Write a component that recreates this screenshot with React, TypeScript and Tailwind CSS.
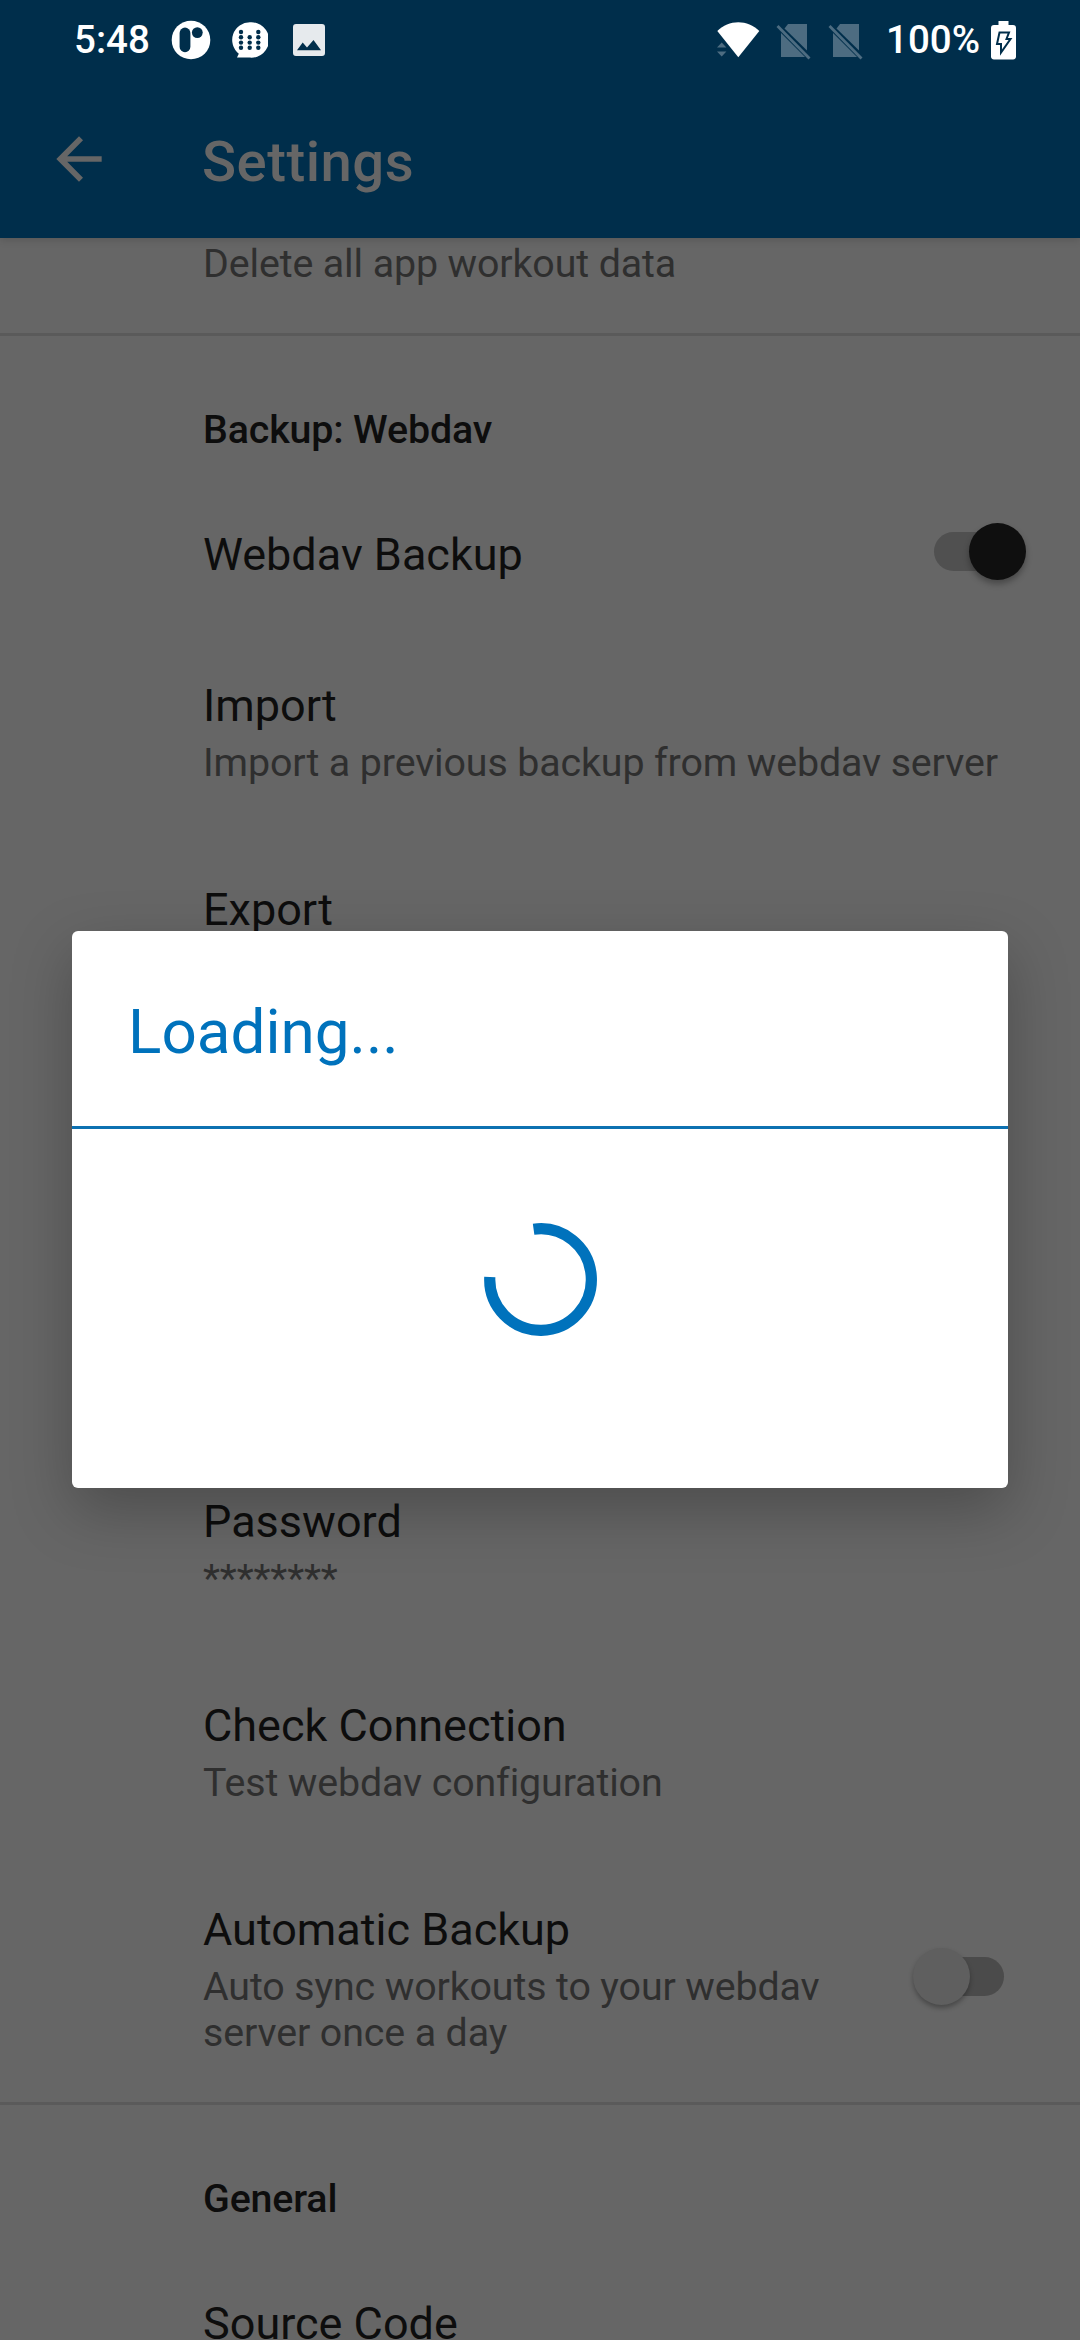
import React from "react";

function Switch({ on }: { on: boolean }) {
  return (
    <div
      className={`relative mr-[76px] mt-[-7px] h-[39px] w-[70px] shrink-0 rounded-full ${on ? "bg-[#505050]" : "bg-[#4b4b4b]"}`}
    >
      <div
        className={`absolute top-[-9px] size-[57px] rounded-full ${
          on
            ? "left-[35px] bg-[#0f0f0f] shadow-[0_4px_6px_rgba(0,0,0,0.3)]"
            : "left-[-21px] bg-[#5f5f5f] shadow-[0_3px_5px_rgba(0,0,0,0.3)]"
        }`}
      />
    </div>
  );
}

function Category({ title }: { title: string }) {
  return (
    <div className="h-[140px] shrink-0 pl-[203px] pt-[71px] text-[39.375px] font-medium leading-[46px] tracking-[-0.15px] text-[#0d0d0d]">
      {title}
    </div>
  );
}

function Divider() {
  return <div className="h-[3px] shrink-0 bg-[#5a5a5a]" />;
}

function Row({
  title,
  summary,
  height,
  children,
}: {
  title: string;
  summary?: string;
  height: string;
  children?: React.ReactNode;
}) {
  return (
    <div className={`flex shrink-0 items-center justify-between pl-[203px] ${height}`}>
      <div className={`flex flex-col gap-[8px] ${children ? "w-[640px]" : ""} ${summary ? "h-full pt-[45px]" : "pb-[1px]"}`}>
        <div className="text-[45px] leading-[53px] text-[#0d0d0d]">{title}</div>
        {summary && (
          <div className="text-[39.375px] leading-[46px] tracking-[-0.12px] text-[#2f2f2f]">{summary}</div>
        )}
      </div>
      {children}
    </div>
  );
}

function SimOff({ className }: { className: string }) {
  return (
    <svg className={className} width="36" height="37" viewBox="0 0 36 37" fill="#4d6c81">
      <path d="M12 0H31V26.5L8.5 4.5Z" />
      <path d="M5 9L29 33H5Z" />
      <path d="M0.5 3L2.5 1L34.5 33.5L32.5 35.5Z" />
    </svg>
  );
}

function StatusBar() {
  const dots: number[][] = [
    [9, 10], [9, 15.3], [9, 20.6], [9, 25.8],
    [17.7, 15.3], [17.7, 20.6], [17.7, 25.8],
    [26.3, 10], [26.3, 15.3], [26.3, 20.6], [26.3, 25.8],
  ];
  return (
    <div className="flex h-[80px] items-center justify-between pl-[74px] pr-[64px] text-[38.5px] font-medium leading-[46px] text-white">
      <div className="flex items-center">
        <span className="w-[97px]">5:48</span>
        <svg width="40" height="40" viewBox="0 0 40 40">
          <circle cx="20" cy="20" r="19.3" fill="#fff" />
          <rect x="8.6" y="7.6" width="10.8" height="24.6" rx="5.4" fill="#002e4b" />
          <circle cx="26.3" cy="12.6" r="5.4" fill="#002e4b" />
        </svg>
        <svg className="ml-[21px]" width="36" height="36" viewBox="0 0 36 36">
          <path d="M18 0.3A17.7 17.7 0 1 1 18 35.6H5L6.8 31.8A17.7 17.7 0 0 1 18 0.3Z" fill="#fff" />
          {dots.map(([x, y]) => (
            <circle key={`${x}-${y}`} cx={x} cy={y} r="2.2" fill="#002e4b" />
          ))}
        </svg>
        <svg className="ml-[25px]" width="32" height="32" viewBox="0 0 32 32">
          <path
            fillRule="evenodd"
            fill="#e6eaed"
            d="M3 0H29A3 3 0 0 1 32 3V29A3 3 0 0 1 29 32H3A3 3 0 0 1 0 29V3A3 3 0 0 1 3 0ZM4 26.3H28L20.5 16L14 23.6L9.7 18.5Z"
          />
        </svg>
      </div>
      <div className="flex items-center">
        <svg width="43" height="36" viewBox="0 0 43 36">
          <path d="M0.3 9C6 3.200 13.500 0.300 21.300 0.300C29 0.300 36.500 3.200 42.300 9L21.300 35.300Z" fill="#fff" />
          <path d="M0 25.500L4.700 20.500L9.400 25.500ZM0 29.500L4.700 34.500L9.400 29.500Z" fill="#4d6c81" />
        </svg>
        <SimOff className="ml-[16px] mt-[4px]" />
        <SimOff className="ml-[16px] mt-[4px]" />
        <span className="ml-[22px] w-[105px] whitespace-nowrap">100%</span>
        <svg width="25" height="39" viewBox="0 0 25 39">
          <path d="M7.500 0H17.500V4H22A3 3 0 0 1 25 7V35A3 3 0 0 1 22 38.500H3A3 3 0 0 1 0 35V7A3 3 0 0 1 3 4H7.500Z" fill="#fff" />
          <path d="M8.500 11.500H18L15.500 18H19.500L10 31.500V23H6Z" fill="#fff" stroke="#002e4b" strokeWidth="2" />
        </svg>
      </div>
    </div>
  );
}

function LoadingDialog() {
  return (
    <div className="absolute left-[72px] top-[931px] flex h-[557px] w-[936px] flex-col rounded-[6px] bg-white shadow-[0_22px_60px_rgba(0,0,0,0.25)]">
      <div className="h-[195px] pl-[56px] pt-[64px] text-[62px] leading-[74px] text-[#0072bc]">Loading...</div>
      <div className="h-[3px] bg-[#0d71b1]" />
      <div className="flex justify-center pt-[83px]">
        <svg width="135" height="135" viewBox="-67.500 -67.500 135 135">
          <path d="M-6.900 -50.300A50.800 50.800 0 1 1 -50.700 -2.400" fill="none" stroke="#0072bc" strokeWidth="11.200" />
        </svg>
      </div>
    </div>
  );
}

export default function App() {
  return (
    <div className="relative flex h-[2340px] w-[1080px] flex-col overflow-hidden bg-[#666666] font-['Roboto',sans-serif]">
      <header className="relative h-[238px] shrink-0 bg-[#002e4b] shadow-[0_2px_8px_rgba(0,0,0,0.15)]">
        <StatusBar />
        <div className="flex h-[158px] items-center pl-[45px]">
          <svg width="68" height="68" viewBox="0 0 24 24" fill="#666666">
            <path d="M20 11H7.830l5.590-5.590L12 4l-8 8 8 8 1.410-1.410L7.830 13H20v-2z" />
          </svg>
          <h1 className="ml-[89px] mt-[5px] text-[56.250px] font-medium leading-[66px] tracking-[0.5px] text-[#666666]">
            Settings
          </h1>
        </div>
      </header>
      <main className="flex flex-col">
        <div className="h-[95px] shrink-0 pl-[203px] pt-[3px] text-[39.375px] leading-[46px] tracking-[-0.12px] text-[#2f2f2f]">
          Delete all app workout data
        </div>
        <Divider />
        <Category title="Backup: Webdav" />
        <Row title="Webdav Backup" height="h-[158px]">
          <Switch on />
        </Row>
        <Row title="Import" summary="Import a previous backup from webdav server" height="h-[204px]" />
        <Row title="Export" summary=" " height="h-[204px]" />
        <div className="h-[408px] shrink-0" />
        <Row title="Password" summary="********" height="h-[204px]" />
        <Row title="Check Connection" summary="Test webdav configuration" height="h-[204px]" />
        <Row title="Automatic Backup" summary="Auto sync workouts to your webdav server once a day" height="h-[244px]">
          <Switch on={false} />
        </Row>
        <Divider />
        <Category title="General" />
        <Row title="Source Code" height="h-[158px]" />
      </main>
      <LoadingDialog />
    </div>
  );
}
